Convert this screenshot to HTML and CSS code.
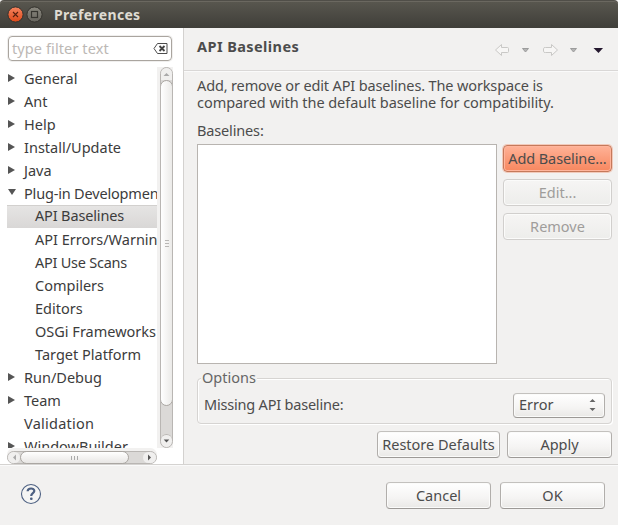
FILE: index.html
```html
<!DOCTYPE html>
<html lang="en">
<head>
<meta charset="utf-8">
<title>Preferences</title>
<link rel="stylesheet" href="styles.css">
</head>
<body>
<div class="window">
  <header class="titlebar">
    <svg class="window-buttons" width="36" height="18" viewBox="0 0 36 18">
      <defs>
        <linearGradient id="close" x1="0" y1="0" x2="0" y2="1"><stop offset="0" stop-color="#f68560"/><stop offset="1" stop-color="#dd4818"/></linearGradient>
        <linearGradient id="max" x1="0" y1="0" x2="0" y2="1"><stop offset="0" stop-color="#8a887f"/><stop offset="1" stop-color="#66645d"/></linearGradient>
      </defs>
      <circle cx="8.5" cy="8.5" r="7.6" fill="url(#close)" stroke="#34322d"/>
      <path d="M6 6l5 5M11 6l-5 5" stroke="#55200f" stroke-width="1.1"/>
      <circle cx="27.5" cy="8.5" r="7.6" fill="url(#max)" stroke="#34322d"/>
      <rect x="24.5" y="5.500" width="6" height="6" fill="none" stroke="#35342f" stroke-width="1.2"/>
    </svg>
    <h1 class="title">Preferences</h1>
  </header>
  <main class="body">
    <nav class="sidebar">
      <div class="filter">
        <span class="placeholder">type filter text</span>
        <svg width="15" height="11" viewBox="0 0 15 11"><path d="M4.500.5h9.500v10H4.500L1 5.500z" fill="#fff" stroke="#4c4c4c"/><path d="M6.500 3l5 5M11.500 3l-5 5" stroke="#444" stroke-width="1.800"/></svg>
      </div>
      <div class="tree-area">
        <ul class="tree">
          <li class="closed"><span>General</span></li>
          <li class="closed"><span>Ant</span></li>
          <li class="closed"><span>Help</span></li>
          <li class="closed"><span>Install/Update</span></li>
          <li class="closed"><span>Java</span></li>
          <li class="open"><span>Plug-in Development</span></li>
          <li class="child selected"><span>API Baselines</span></li>
          <li class="child"><span>API Errors/Warnings</span></li>
          <li class="child api"><span>API Use Scans</span></li>
          <li class="child"><span>Compilers</span></li>
          <li class="child"><span>Editors</span></li>
          <li class="child"><span>OSGi Frameworks</span></li>
          <li class="child"><span>Target Platform</span></li>
          <li class="closed"><span>Run/Debug</span></li>
          <li class="closed"><span>Team</span></li>
          <li class="validation"><span>Validation</span></li>
          <li class="closed"><span>WindowBuilder</span></li>
        </ul>
        <div class="gutter">
          <div class="vbar">
            <svg class="vstep" width="11" height="12" viewBox="0 0 11 12"><path d="M2.500 8h6L5.500 5z" fill="#aaa"/></svg>
            <div class="vthumb"><i></i><i></i><i></i></div>
            <svg class="vstep down" width="11" height="13" viewBox="0 0 11 13"><path d="M2.500 5h6L5.500 8z" fill="#555"/></svg>
          </div>
        </div>
        <div class="hbar">
          <svg width="12" height="11" viewBox="0 0 12 11"><path d="M8 2.500v6L5 5.500z" fill="#aaa"/></svg>
          <div class="hthumb"><i></i><i></i><i></i></div>
          <svg class="right" width="13" height="11" viewBox="0 0 13 11"><path d="M5 2.500v6l3-3z" fill="#555"/></svg>
        </div>
      </div>
    </nav>
    <section class="page">
      <div class="page-head">
        <h2>API Baselines</h2>
        <svg class="nav" width="110" height="14" viewBox="0 0 110 14">
          <g fill="#f7f6f5" stroke="#c9c8c6"><path d="M.5 7L6.500 1.500V4.500H12.500Q13.500 4.500 13.500 5.500V8.500Q13.500 9.500 12.500 9.500H6.500V12.500z"/><path d="M62.500 7L56.500 1.500V4.500H50.500Q48.500 4.500 48.500 5.500V8.500Q48.500 9.500 50.500 9.500H56.500V12.500z"/></g>
          <g fill="#b5b5b5" stroke="#9c9c9c"><path d="M27.500 5.500h6l-3 3.500z"/><path d="M75.500 5.500h6l-3 3.500z"/></g>
          <path d="M98.500 5h9.500L103.500 10z" fill="#25182f"/>
        </svg>
      </div>
      <div class="page-body">
        <p class="desc"><span class="line1">Add, remove or edit API baselines. The workspace is</span><br><span class="line2">compared with the default baseline for compatibility.</span></p>
        <div class="label">Baselines:</div>
        <div class="baselines">
          <div class="list"></div>
          <div class="side-buttons">
            <div class="button primary">Add Baseline...</div>
            <div class="button disabled">Edit...</div>
            <div class="button disabled">Remove</div>
          </div>
        </div>
        <div class="group">
          <span class="legend">Options</span>
          <span class="missing">Missing API baseline:</span>
          <div class="button select"><span>Error</span><svg width="7" height="12" viewBox="0 0 7 12"><path d="M.5 3h6l-3-3zM.5 9h6l-3 3z" fill="#666"/></svg></div>
        </div>
        <div class="actions">
          <div class="button restore">Restore Defaults</div>
          <div class="button apply">Apply</div>
        </div>
      </div>
    </section>
  </main>
  <footer class="footer">
    <svg class="help" width="22" height="22" viewBox="0 0 22 22"><circle cx="11" cy="11" r="9.500" fill="#f5f5f4" stroke="#4d6082" stroke-width="1.100"/><path d="M7.600 8.300C7.800 4.700 14.400 4.500 14.300 8C14.200 10.200 11.200 10.200 11.200 13" fill="none" stroke="#4d6082" stroke-width="2.200"/><rect x="10" y="14.500" width="2.600" height="2.400" rx="1" fill="#4d6082"/></svg>
    <div class="button cancel">Cancel</div>
    <div class="button ok">OK</div>
  </footer>
</div>
</body>
</html>
```

FILE: styles.css
```css
* { box-sizing: border-box; }
body { margin: 0; background: #f2f1f0; color: #4c4c4c; font: 14.500px/17px "Noto Sans", "Open Sans", sans-serif; white-space: nowrap; }
h1, h2, p, ul { margin: 0; padding: 0; }
svg { display: block; }
.window { width: 618px; height: 525px; display: flex; flex-direction: column; overflow: hidden; }
.titlebar { height: 28px; flex: none; display: flex; align-items: center; gap: 11px; padding: 1px 0 0 7px; background: linear-gradient(#59574f, #3f3e39); border-top: 1px solid #504e48; box-shadow: inset 0 1px #6b6860; border-radius: 4px 4px 0 0; }
.title { font-size: 14px; line-height: 17px; letter-spacing: .33px; margin-top: -2px; font-weight: 700; color: #dfdbd2; }
.body { height: 436px; flex: none; display: flex; }
.sidebar { width: 184px; flex: none; background: #fff; border-right: 1px solid #d3d1cf; padding: 8px 0 0 7px; }
.filter { width: 164px; height: 25px; margin: 0 0 6px 1px; border: 1px solid #aaa59f; border-radius: 4px; box-shadow: 0 0 0 1px #f0efee; display: flex; align-items: center; justify-content: space-between; padding: 0 3px; }
.placeholder { color: #bcb8b5; letter-spacing: .1px; }
.tree-area { display: grid; grid-template-columns: 150px 16px; grid-template-rows: 381px 16px; }
.tree { list-style: none; overflow: hidden; color: #3c3c3c; }
.tree li { height: 23px; padding-left: 17px; line-height: 23px; position: relative; }
.tree .child { padding-left: 28px; }
.tree .selected { background: linear-gradient(#e6e5e4, #d9d7d6); box-shadow: inset 0 1px #d2d0ce; line-height: 21px; letter-spacing: -.15px; }
.tree .open { letter-spacing: -.18px; }
.tree .api { letter-spacing: -.25px; }
.tree .validation { letter-spacing: .25px; }
.closed::before, .open::before { content: ""; position: absolute; left: 1px; top: 7px; border: solid transparent; border-width: 4px 0 4px 7px; border-left-color: #555; }
.open::before { top: 7px; border-width: 6px 4px 0; border-color: #555 transparent transparent; }
.gutter { background: #f2f1f0; padding-left: 3px; }
.vbar, .hbar { background: #dbd9d7; border: 1px solid #b9b6b3; border-radius: 7px; display: flex; }
.vbar { width: 13px; height: 381px; flex-direction: column; overflow: hidden; }
.vstep { background: #f0efee; flex: none; }
.vstep.down { margin-top: auto; border-top: 1px solid #b9b6b3; border-radius: 6px; }
.vthumb, .hthumb { flex: none; display: flex; align-items: center; justify-content: center; gap: 2px; border: 1px solid #aaa6a2; border-radius: 7px; }
.vthumb { width: 13px; height: 326px; margin-left: -1px; flex-direction: column; background: linear-gradient(90deg, #fff, #ebeae8); }
.vthumb i { width: 4px; height: 1px; background: #b9b7b5; }
.hbar { grid-column: 1 / 3; width: 150px; height: 13px; margin-top: 3px; background: #dbd9d7; box-shadow: 0 -3px #f2f1f0; overflow: visible; }
.hbar svg { background: #f0efee; border-radius: 6px; }
.hthumb { width: 109px; height: 13px; margin-top: -1px; background: linear-gradient(#fff, #e8e6e4); }
.hthumb i { width: 1px; height: 4px; background: #aaa; }
.hbar .right { margin-left: auto; }
.page { flex: 1; min-width: 0; }
.page-head { height: 43px; display: flex; justify-content: space-between; padding: 9px 13px 0 13px; border-bottom: 1px solid #d9d7d6; box-shadow: 0 1px #fafafa; }
h2 { font-size: 14.500px; line-height: 18px; letter-spacing: .42px; }
.nav { margin-top: 6px; }
.page-body { padding: 7px 6px 0 13px; }
.label { margin-top: 10px; height: 18px; letter-spacing: -.15px; }
.baselines { display: flex; gap: 6px; height: 220px; margin-top: 4px; }
.desc { height: 34px; margin-top: -1px; margin-bottom: 11px; }
.line1 { letter-spacing: -.14px; }
.line2 { letter-spacing: -.05px; }
.list { width: 300px; background: #fff; border: 1px solid #b8b4b0; }
.side-buttons { width: 109px; display: flex; flex-direction: column; gap: 7px; padding-top: 1px; }
.button { height: 27px; border: 1px solid #b5b2af; border-color: #c3c1be #b1aeab #9c9996; border-radius: 4px; background: linear-gradient(#fff, #f5f4f3 60%, #e9e8e6); box-shadow: inset 0 0 0 1px #fbfbfa; display: flex; align-items: center; justify-content: center; }
.primary { letter-spacing: -.1px; background: linear-gradient(#ffb297, #f7875f); border-color: #c5795b; box-shadow: inset 0 0 0 1px #ffb59c, 0 0 0 1px #f2cabb; }
.disabled { color: #9f9d9b; background: linear-gradient(#f6f5f4, #ededeb); border-color: #d1cfcd; }
.group { position: relative; height: 46px; margin-top: 14px; border: 1px solid #d6d4d2; border-radius: 4px; box-shadow: 1px 1px #fff, inset 1px 1px #fff; display: flex; align-items: center; justify-content: space-between; padding: 8px 6px 0; }
.legend { position: absolute; left: 3px; top: -10px; padding: 0 1px; background: #f2f1f0; color: #666; }
.missing { letter-spacing: -.2px; margin-top: -2px; }
.select { width: 92px; height: 25px; justify-content: space-between; padding: 0 8px 2px 5px; }
.select svg { margin-top: 2px; }
.actions { display: flex; justify-content: flex-end; gap: 7px; margin-top: 7px; }
.restore { width: 123px; }
.apply, .cancel, .ok { width: 105px; }
.footer { height: 61px; border-top: 1px solid #d5d3d1; box-shadow: inset 0 1px #fafafa; display: flex; gap: 9px; padding: 17px 13px 0 20px; }
.help { margin: 1px auto 0 0; }
```
